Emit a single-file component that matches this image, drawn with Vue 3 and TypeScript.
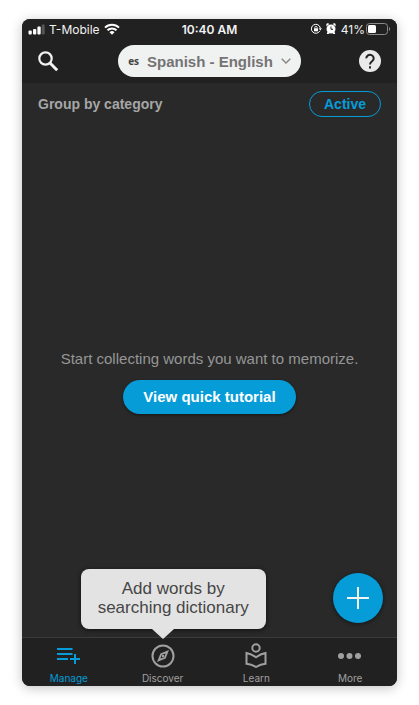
<script setup lang="ts">
import { ref } from 'vue'

type TabId = 'manage' | 'discover' | 'learn' | 'more'

interface Tab {
  id: TabId
  label: string
}

const tabs: Tab[] = [
  { id: 'manage', label: 'Manage' },
  { id: 'discover', label: 'Discover' },
  { id: 'learn', label: 'Learn' },
  { id: 'more', label: 'More' },
]

const current = ref<TabId>('manage')
</script>

<template>
  <div class="page">
    <div class="phone">
      <header class="top">
        <div class="status">
          <div class="status-side">
            <svg class="signal" width="17" height="12" viewBox="0 0 17 12" aria-hidden="true">
              <rect x="0.500" y="7.500" width="3.300" height="4" rx="1" fill="#fff" />
              <rect x="5" y="6" width="3.300" height="5.500" rx="1" fill="#fff" />
              <rect x="9.400" y="3.500" width="3.300" height="8" rx="1" fill="#fff" />
              <rect x="13.700" y="1.500" width="3" height="10" rx="1" fill="#555" />
            </svg>
            <span>T-Mobile</span>
            <svg width="16" height="12" viewBox="0 0 16 12" fill="none" stroke="#fff" stroke-width="2" aria-hidden="true">
              <path d="M1 4.600a10 10 0 0 1 14 0" />
              <path d="M3.500 7.300a6.400 6.400 0 0 1 9 0" />
              <path d="M8 11.800 5.500 9.300a3.600 3.600 0 0 1 5 0z" fill="#fff" stroke="none" />
            </svg>
          </div>
          <span class="clock">10:40 AM</span>
          <div class="status-side right">
            <svg width="12" height="12" viewBox="0 0 12 12" fill="none" stroke="#fff" aria-hidden="true">
              <path d="M9.900 7.800A4.500 4.500 0 1 1 10.300 5" />
              <path d="M8.700 5.200h3.200l-1.600 2.200z" fill="#fff" stroke="none" />
              <rect x="4" y="5.300" width="4" height="3" fill="#fff" stroke="none" />
              <path d="M4.800 5.500V4.600a1.200 1.200 0 0 1 2.400 0v.9" stroke-width=".8" />
            </svg>
            <svg class="alarm" width="10" height="12" viewBox="0 0 10 12" aria-hidden="true">
              <circle cx="5" cy="6" r="4.500" fill="#fff" />
              <path d="M.4 3.600V2A1.500 1.500 0 0 1 3.200 1zM9.600 3.600V2A1.500 1.500 0 0 0 6.800 1zM1.500 8.500.8 11h2.600zM8.500 8.500l.7 2.500H6.600z" fill="#fff" />
              <path d="M5 3.500V6.300H7" fill="none" stroke="#222" />
            </svg>
            <div class="battery">
              <span>41%</span>
              <svg width="25" height="12" viewBox="0 0 25 12" aria-hidden="true">
                <rect x=".5" y=".5" width="21" height="11" rx="3" fill="none" stroke="#8a8a8a" />
                <rect x="2" y="2" width="8" height="8" rx="1.500" fill="#fff" />
                <path d="M23 4v4a2.300 2.300 0 0 0 0-4" fill="#8a8a8a" />
              </svg>
            </div>
          </div>
        </div>
        <div class="toolbar">
          <button type="button" class="icon-button" aria-label="Search">
            <svg width="22" height="22" viewBox="0 0 22 22" fill="none" stroke="#f2f2f2" aria-hidden="true">
              <circle cx="7.500" cy="8.500" r="6.200" stroke-width="2.200" />
              <path d="M12 13 19.200 20.200" stroke-width="3" />
            </svg>
          </button>
          <button type="button" class="language">
            <span class="code">es</span>
            <span>Spanish - English</span>
            <svg width="10" height="6" viewBox="0 0 10 6" fill="none" stroke="#8a8a8a" stroke-width="1.500" aria-hidden="true">
              <path d="M.7.700 5 5 9.300.7" />
            </svg>
          </button>
          <button type="button" class="icon-button" aria-label="Help">
            <svg width="22" height="22" viewBox="0 0 22 22" aria-hidden="true">
              <circle cx="11" cy="11" r="11" fill="#eaeaea" />
              <path d="M7.300 8.400a3.700 3.500 0 1 1 6 2.600C11.800 12.200 11 12.700 11 14.500" fill="none" stroke="#222" stroke-width="2" />
              <rect x="10" y="16.300" width="2" height="2.200" fill="#222" />
            </svg>
          </button>
        </div>
      </header>

      <main class="content">
        <div class="filter">
          <span class="filter-label">Group by category</span>
          <button type="button" class="active-button">Active</button>
        </div>
        <section class="empty">
          <p>Start collecting words you want to memorize.</p>
          <button type="button" class="tutorial">View quick tutorial</button>
        </section>
        <button type="button" class="add" aria-label="Add">
          <svg width="22" height="22" viewBox="0 0 22 22" stroke="#f4f4f4" stroke-width="2" aria-hidden="true">
            <path d="M11 0v22M0 11h22" />
          </svg>
        </button>
      </main>

      <nav class="tabs">
        <div v-for="tab in tabs" :key="tab.id" class="tab-slot">
          <div v-if="tab.id === 'discover'" class="tip" role="tooltip">Add words by<br />searching dictionary</div>
          <button
            type="button"
            class="tab"
            :class="{ selected: current === tab.id }"
            @click="current = tab.id"
          >
            <svg v-if="tab.id === 'manage'" width="26" height="26" viewBox="0 0 26 26" fill="none" stroke="currentColor" stroke-width="2" aria-hidden="true">
              <path d="M1 6h15.500M1 11h15.500M1 16h11M19 11v10M14 16h10" />
            </svg>
            <svg v-else-if="tab.id === 'discover'" width="26" height="26" viewBox="0 0 26 26" aria-hidden="true">
              <circle cx="13" cy="13" r="10.500" fill="none" stroke="currentColor" stroke-width="2" />
              <path fill-rule="evenodd" d="M19 7 15.600 15.600 7 19 10.400 10.400zM15.600 10.400l-3.800 1.400L10.400 15.600l3.800-1.400z" fill="currentColor" />
              <circle cx="13" cy="13" r="1.300" fill="currentColor" />
            </svg>
            <svg v-else-if="tab.id === 'learn'" width="26" height="26" viewBox="0 0 26 26" fill="none" stroke="currentColor" stroke-width="2" aria-hidden="true">
              <circle cx="13" cy="5" r="3.700" />
              <path d="M13 14.200Q8.500 10.800 3.500 9.900V20.800Q8.500 21.300 13 24Q17.500 21.300 22.500 20.800V9.900Q17.500 10.800 13 14.200z" />
            </svg>
            <svg v-else width="26" height="26" viewBox="0 0 26 26" fill="currentColor" aria-hidden="true">
              <circle cx="4" cy="13" r="3" />
              <circle cx="12.500" cy="13" r="3" />
              <circle cx="21" cy="13" r="3" />
            </svg>
            <span>{{ tab.label }}</span>
          </button>
        </div>
      </nav>
    </div>
  </div>
</template>

<style>
body {
  background: #fff;
}
</style>

<style scoped>
.page {
  box-sizing: border-box;
  display: flex;
  min-height: 100vh;
  padding: 19px 22px;
  font-family: "Liberation Sans", Arial, sans-serif;
}

button {
  padding: 0;
  border: 0;
  background: none;
  color: inherit;
  font: inherit;
  cursor: pointer;
}

svg {
  display: block;
  flex: none;
}

.phone {
  display: flex;
  flex: 1;
  flex-direction: column;
  border-radius: 8px;
  background: #292929;
  box-shadow: 0 2px 12px rgba(0, 0, 0, 0.24);
}

.top {
  border-radius: 8px 8px 0 0;
  background: #212121;
}

.status {
  display: grid;
  grid-template-columns: 1fr auto 1fr;
  align-items: center;
  height: 20px;
  padding: 0 6px;
  color: #f2f2f2;
  font-family: Inter, sans-serif;
  font-size: 12px;
}

.status-side {
  display: flex;
  align-items: center;
  gap: 4px;
}

.right {
  justify-content: flex-end;
}

.battery {
  display: flex;
  align-items: center;
  gap: 1px;
  padding-left: 1px;
}

.clock {
  font-weight: 600;
}

.toolbar {
  display: flex;
  align-items: center;
  justify-content: space-between;
  height: 44px;
  padding: 0 16px;
}

.language {
  display: flex;
  align-items: center;
  height: 32px;
  gap: 8px;
  padding: 0 10px;
  border-radius: 16px;
  background: #f0f1f1;
  color: #747474;
  font-size: 15px;
  font-weight: 700;
}

.code {
  color: #444;
  font-family: "Open Sans", sans-serif;
  font-size: 10px;
}

.content {
  position: relative;
  display: flex;
  flex: 1;
  flex-direction: column;
}

.filter {
  display: flex;
  align-items: center;
  justify-content: space-between;
  padding: 8px 16px;
  color: #a6a6a6;
  font-size: 14px;
  font-weight: 700;
}

.active-button {
  width: 72px;
  height: 26px;
  border: 1px solid #059cd8;
  border-radius: 13px;
  color: #059cd8;
}

.empty {
  display: flex;
  flex: 1;
  flex-direction: column;
  align-items: center;
  justify-content: center;
  gap: 12px;
  padding-top: 2px;
  color: #969696;
  font-size: 15px;
  line-height: 18px;
}

.empty p {
  margin: 0;
}

.tutorial {
  height: 34px;
  padding: 0 20px;
  border-radius: 17px;
  background: #059cd8;
  box-shadow: 0 1px 3px rgba(0, 0, 0, 0.5);
  color: #fff;
  font-weight: 700;
}

.add {
  position: absolute;
  right: 14px;
  bottom: 14px;
  display: grid;
  width: 50px;
  height: 50px;
  place-items: center;
  border-radius: 50%;
  background: #059cd8;
  box-shadow: 0 1px 4px rgba(0, 0, 0, 0.5);
}

.tabs {
  display: grid;
  grid-template-columns: repeat(4, 1fr);
  border-top: 1px solid #3b3b3b;
  border-radius: 0 0 8px 8px;
  background: #212121;
}

.tab-slot {
  position: relative;
}

.tab {
  display: flex;
  flex-direction: column;
  align-items: center;
  width: 100%;
  height: 48px;
  gap: 3px;
  padding-top: 5px;
  color: #a0a0a0;
  font-family: Inter, sans-serif;
  font-size: 10px;
  line-height: 12px;
}

.selected {
  color: #059cd8;
}

.tip {
  position: absolute;
  bottom: calc(100% + 9px);
  left: -35px;
  box-sizing: border-box;
  width: 185px;
  padding: 10px 0 12px;
  border-radius: 8px;
  background: #e3e3e3;
  box-shadow: 0 1px 5px rgba(0, 0, 0, 0.6);
  color: #464646;
  font-size: 17px;
  line-height: 19px;
  text-align: center;
  white-space: nowrap;
}

.tip::after {
  position: absolute;
  top: 100%;
  left: 71px;
  border: 11px solid transparent;
  border-top: 10px solid #e3e3e3;
  border-bottom: 0;
  content: "";
}
</style>
